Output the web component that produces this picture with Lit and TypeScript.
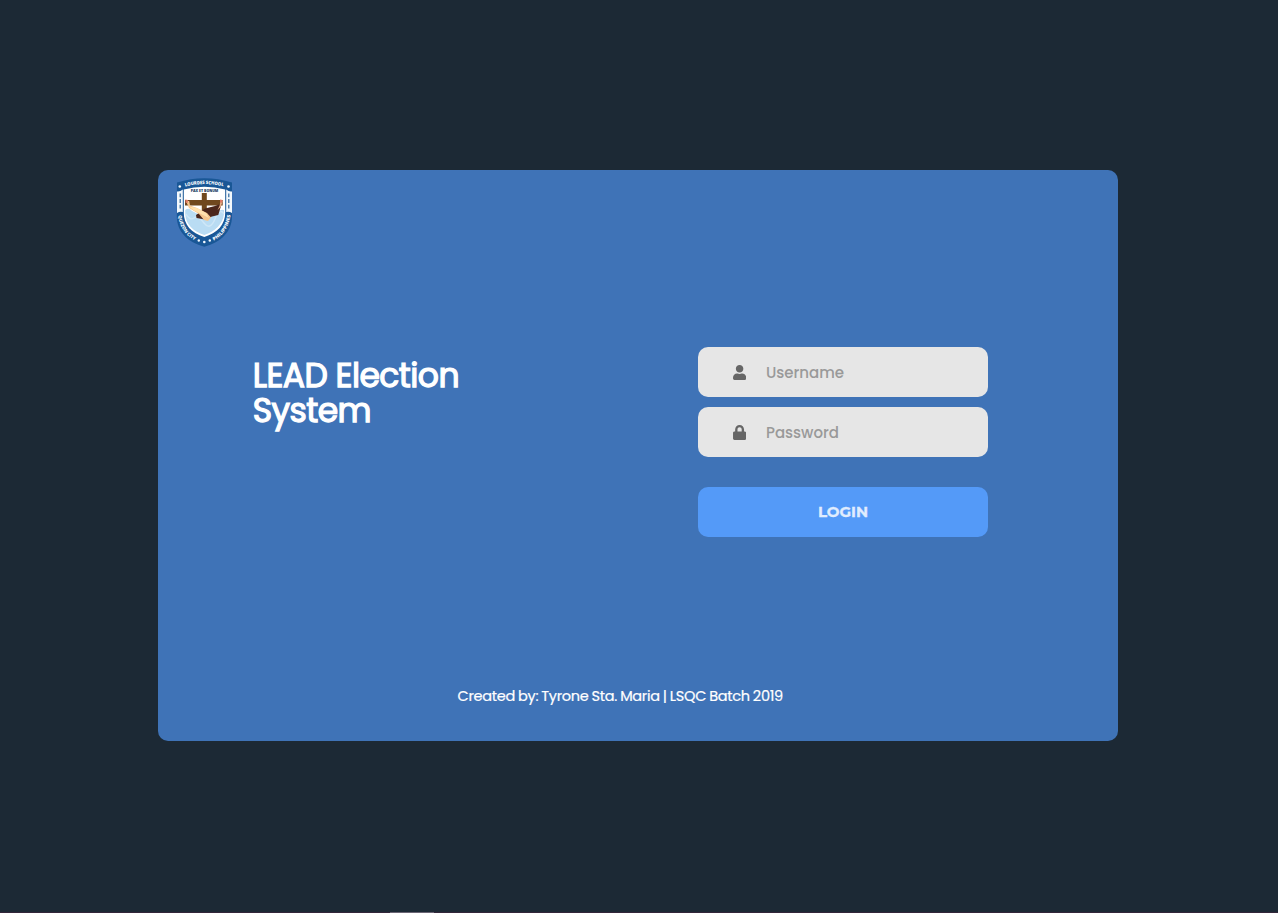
import { LitElement, html, svg, css } from "lit";
import { customElement } from "lit/decorators.js";

const userIcon = svg`<svg class="icon" viewBox="0 0 448 512"><path d="M224 256c70.700 0 128-57.300 128-128S294.700 0 224 0 96 57.300 96 128s57.300 128 128 128zm89.600 32h-16.700c-22.200 10.200-46.900 16-72.900 16s-50.600-5.800-72.900-16h-16.700C60.200 288 0 348.200 0 422.400V464c0 26.500 21.500 48 48 48h352c26.500 0 48-21.500 48-48v-41.600c0-74.200-60.200-134.400-134.400-134.400z"/></svg>`;
const lockIcon = svg`<svg class="icon" viewBox="0 0 448 512"><path d="M400 224h-24v-72C376 68.200 307.800 0 224 0S72 68.200 72 152v72H48c-26.500 0-48 21.500-48 48v192c0 26.500 21.500 48 48 48h352c26.500 0 48-21.500 48-48V272c0-26.500-21.500-48-48-48zm-104 0H152v-72c0-39.700 32.300-72 72-72s72 32.300 72 72v72z"/></svg>`;

@customElement("school-crest")
export class SchoolCrest extends LitElement {
  static styles = css`
    :host { display: block; width: 60px; height: 72px; }
    svg { display: block; width: 60px; height: 72px; }
    .ring { font: 800 4.700px "Open Sans", sans-serif; fill: #f2f8fd; }
    .motto { font: 800 4px "Open Sans", sans-serif; fill: #17385e; }
  `;
  render() {
    return html`<svg viewBox="0 0 60 72">
      <defs>
        <path id="top" d="M11.200 10.600Q30.300 5.600 50 10.600" />
        <path id="left" d="M4.200 39.500C6 53 13 61 24 66" />
        <path id="right" d="M37 66C48 61 54.500 53 56.900 37.500" />
      </defs>
      <path d="M3 6.500Q30.300-2 58 6.500V40C58 56 47 66 30.300 70.800C13.500 66 2.800 56 2.800 40Z" fill="#195796" />
      <path d="M3 15.500Q6 16 8.800 13.500V36Q6 35 3 37ZM52.200 13.500Q55 16 58 15.500V37Q55 35 52.200 36Z" fill="#f3f8fc" />
      <path d="M6.200 17.500V34M54.800 17.500V34" stroke="#2c659c" stroke-width="1.200" stroke-dasharray="3.800 1.800" />
      <path d="M9.800 13.500Q30.300 8 51.200 13.500V36C51.500 49 43 57 30.300 61C17.500 57 9.500 49 9.800 36Z" fill="#fff" />
      <path d="M11.200 34Q15 31 18 35L24 38L42 37Q46 33 50 34V38C49 48 41 55.500 30.300 59C19.500 55.500 12 49 11.200 38Z" fill="#b9dcf3" />
      <path d="M12 38Q16 45 20 42T30 47T41 43T50 38" stroke="#cfe7f7" stroke-width="1.400" fill="none" />
      <path d="M27.800 17H32.800V24H48.700V29.500H32.800V38H27.800V29.500H11V24H27.800Z" fill="#70481e" />
      <path d="M22 39L31 32.500L41 30L47.700 27.500L44.300 39L38 40.500L31 43.500L22.500 42Z" fill="#4b261b" />
      <path d="M12 25L15.200 25L16 29.500L23 32L33 37L37 41.500L34 45L30 44L25 38L15 32Z" fill="#f6c68e" />
      <path d="M15 30.500L23 32L32 37L35 42L29 39L20 34.500Z" fill="#ffe1ae" />
      <path d="M46.500 25L48.600 25L47 30.500L43.500 34L45.500 30Z" fill="#e8b08a" />
      <path d="M11.200 23.500L14 24L13.500 27L11.800 27ZM46 23.500L48.600 24L48 27L46 26Z" fill="#dc7965" />
      <g fill="#f5faff">
        <circle cx="5.800" cy="10.500" r="1.300" /><circle cx="54.500" cy="10.500" r="1.300" />
        <circle cx="24.800" cy="64.500" r="1.200" /><circle cx="30.300" cy="66" r="1.300" /><circle cx="35.800" cy="64.500" r="1.200" />
      </g>
      <text class="ring"><textPath href="#top" textLength="38.500" lengthAdjust="spacingAndGlyphs">LOURDES SCHOOL</textPath></text>
      <text class="motto" x="16.800" y="15.800" textLength="27.500" lengthAdjust="spacingAndGlyphs">PAX ET BONUM</text>
      <text class="ring"><textPath href="#left" textLength="31" lengthAdjust="spacingAndGlyphs">QUEZON CITY</textPath></text>
      <text class="ring"><textPath href="#right" startOffset="3" textLength="32" lengthAdjust="spacingAndGlyphs">PHILIPPINES</textPath></text>
    </svg>`;
  }
}

@customElement("app-root")
export class AppRoot extends LitElement {
  static styles = css`
    :host {
      display: flex; flex-direction: column; height: 100vh; box-sizing: border-box;
      background: #1c2935; font-family: Poppins, Inter, sans-serif; overflow: hidden;
    }
    .page { flex: 1; padding: 170px 160px 0 158px; box-sizing: border-box; }
    .card {
      width: 960px; height: 571px; border-radius: 10px; background: #3f73b7;
      display: flex; flex-direction: column; box-sizing: border-box; padding-top: 6px;
    }
    school-crest { margin-left: 16px; }
    .body { display: flex; justify-content: space-between; padding: 99px 130px 0 94.700px; height: 190px; }
    h1 {
      margin: 11px 0 0; width: 230px; color: #fff; font-size: 33px; line-height: 35px;
      font-weight: 400; letter-spacing: -.55px; -webkit-text-stroke: 1.250px #fff;
    }
    form { width: 290px; display: flex; flex-direction: column; gap: 10px; }
    .field {
      height: 50px; border-radius: 10px; background: #e6e6e6; display: flex; align-items: center;
      padding-left: 35px; box-sizing: border-box; flex: none;
    }
    .icon { width: 13.200px; height: 15px; fill: #666; flex: none; }
    input {
      border: 0; outline: 0; padding: 0; margin-left: 19.800px; width: 190px; height: 50px; background: none;
      font: 500 15px Poppins, Inter, sans-serif; color: #666;
    }
    input::placeholder { color: #999; opacity: 1; }
    button {
      margin: 20px 0 0; border: 0; border-radius: 10px; height: 50px; flex: none; padding: 0 0 2px;
      background: #549af8; color: #e0edfe; font: 700 15px Montserrat, Inter, sans-serif;
      -webkit-text-stroke: .3px #e0edfe;
    }
    .credit {
      color: #fff; font-size: 14.500px; line-height: 20px; margin: 149px 0 0 299.500px; white-space: nowrap;
      letter-spacing: -.29px; word-spacing: -.5px; -webkit-text-stroke: .2px #fff;
    }
    .strip { height: 1px; background: #33263a; padding-left: 390px; }
    .thumb { width: 44px; height: 1px; background: #6b6575; }
  `;
  render() {
    return html`
      <div class="page">
        <main class="card">
          <school-crest></school-crest>
          <section class="body">
            <h1>LEAD Election<br />System</h1>
            <form @submit=${(e: Event) => e.preventDefault()}>
              <label class="field">${userIcon}<input class="user" placeholder="Username" /></label>
              <label class="field">${lockIcon}<input class="pass" type="password" placeholder="Password" /></label>
              <button>LOGIN</button>
            </form>
          </section>
          <div class="credit">Created by: Tyrone Sta. Maria | LSQC Batch 2019</div>
        </main>
      </div>
      <div class="strip"><div class="thumb"></div></div>
    `;
  }
}
